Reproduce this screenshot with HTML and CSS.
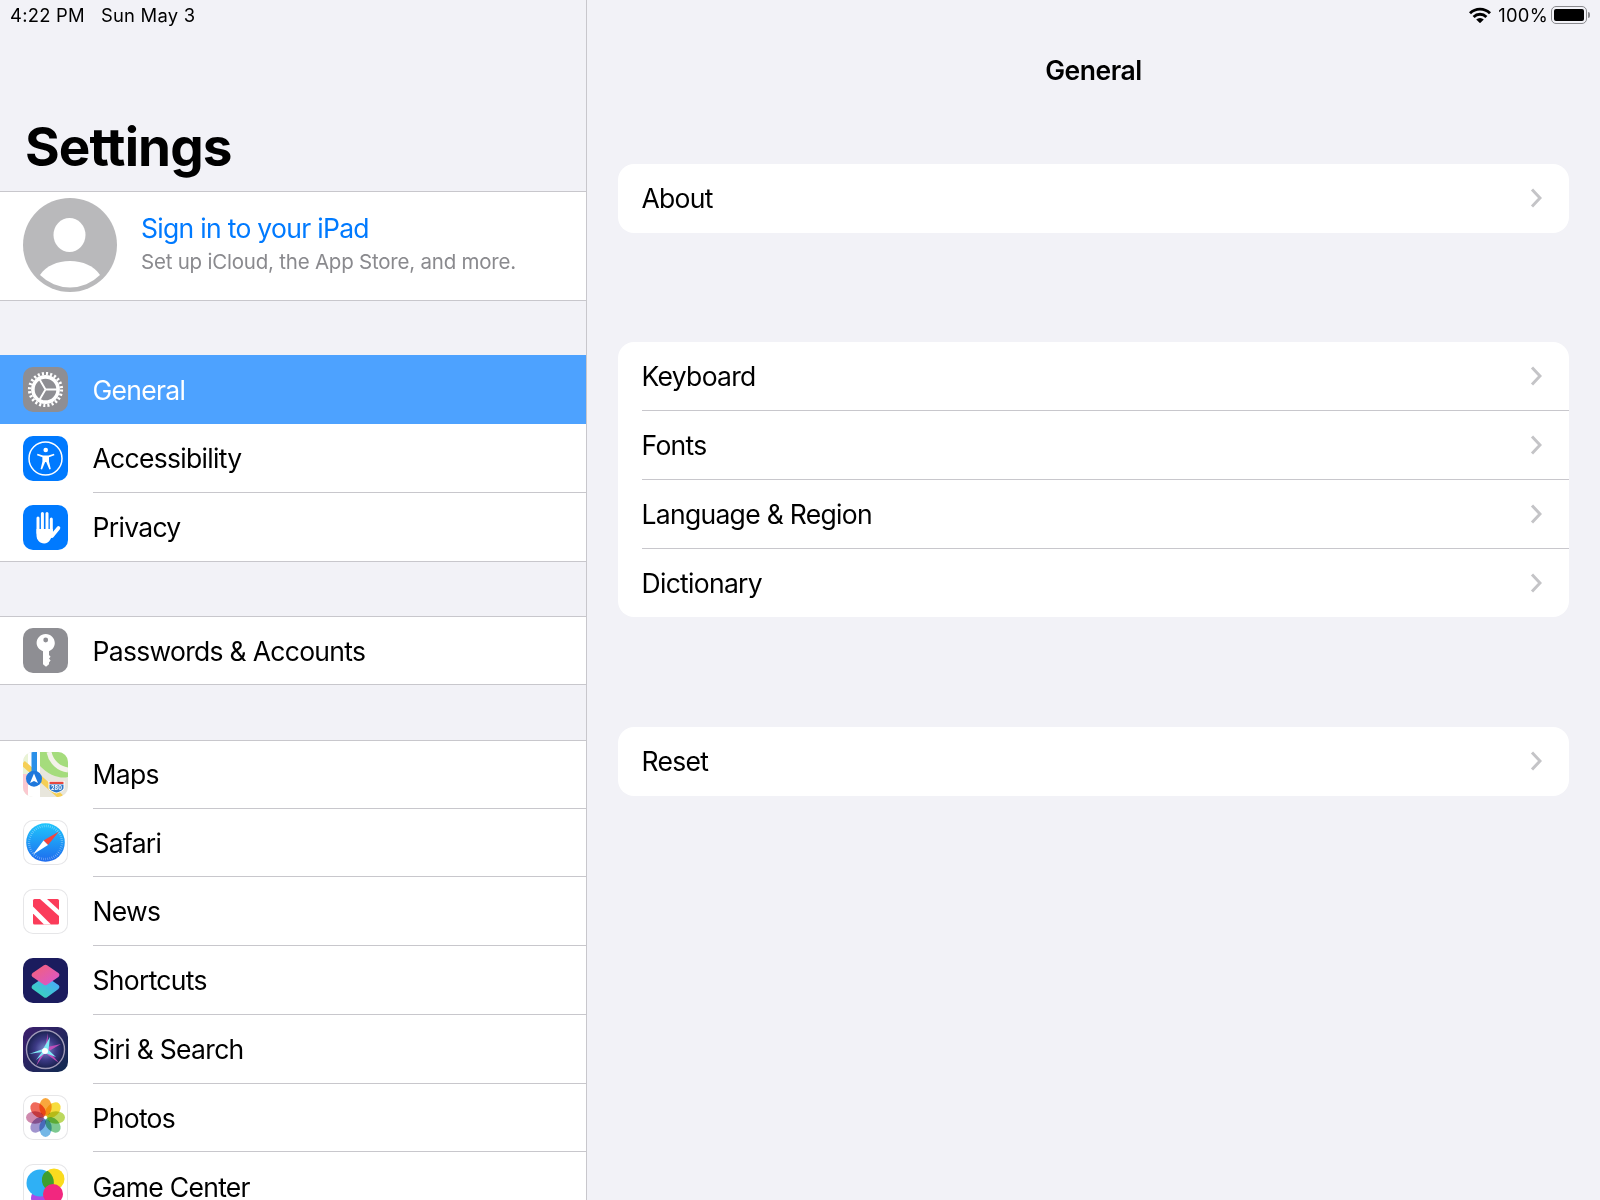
FILE: index.html
```html
<!DOCTYPE html>
<html lang="en">
<head>
<meta charset="UTF-8">
<meta name="viewport" content="width=device-width, initial-scale=1.0">
<title>Settings</title>
<link rel="stylesheet" href="styles.css">
</head>
<body>

<div class="app">

    <!-- left column -->
    <aside class="sidebar">
        <div class="status">
            <span class="status-time">4:22 PM</span>
            <span>Sun May 3</span>
        </div>
        <h1 class="large-title">Settings</h1>

        <div class="profile">
            <svg class="avatar" viewBox="0 0 94 94">
                <circle cx="47" cy="47" r="47" fill="#b9b9bb"/>
                <ellipse cx="46.5" cy="37" rx="16" ry="17" fill="#fff"/>
                <path d="M17 77C23 68 34 63 47 63C60 63 71 68 77 77A42.4 42.4 0 0 1 17 77Z" fill="#fff"/>
            </svg>
            <div class="profile-text">
                <div class="profile-name">Sign in to your iPad</div>
                <div class="profile-sub">Set up iCloud, the App Store, and more.</div>
            </div>
        </div>

        <div class="group">
            <div class="row row-active">
                <svg class="icon" viewBox="0 0 45 45">
                    <rect width="45" height="45" fill="#8e8e93"/>
                    <circle cx="22.5" cy="22.5" r="16" fill="none" stroke="#fff" stroke-width="3.2" stroke-dasharray="2.09 2.1"/>
                    <circle cx="22.5" cy="22.5" r="12.6" fill="none" stroke="#fff" stroke-width="3.6"/>
                    <path d="M22.5 22.5H34M22.5 22.5L16.8 12.8M22.5 22.5L16.8 32.2" stroke="#fff" stroke-width="1.9" fill="none"/>
                </svg>
                <div class="row-body">General</div>
            </div>
            <div class="row">
                <svg class="icon" viewBox="0 0 45 45">
                    <rect width="45" height="45" fill="#007aff"/>
                    <circle cx="22.5" cy="22.5" r="16.5" fill="none" stroke="#fff" stroke-width="1.5"/>
                    <circle cx="22.7" cy="14" r="2.3" fill="#fff"/>
                    <path d="M14.5 17.8L20 19.4H25.4L31 17.8L31.4 19.2L26 21.2V25.4L27.8 33L26.4 33.4L23.2 26H22.2L19 33.4L17.6 33L19.4 25.4V21.2L14 19.2Z" fill="#fff"/>
                </svg>
                <div class="row-body">Accessibility</div>
            </div>
            <div class="row">
                <svg class="icon" viewBox="0 0 45 45">
                    <rect width="45" height="45" fill="#007aff"/>
                    <path d="M15 13V28M19.4 8.5V26M24 8.5V26M28.3 14V28" stroke="#fff" stroke-width="3" stroke-linecap="round" fill="none"/>
                    <path d="M29 31L35.5 23" stroke="#fff" stroke-width="3.6" stroke-linecap="round" fill="none"/>
                    <path d="M13.5 24H29.8V30L27 35C25.6 37.4 23.8 38.4 21.2 38.4C16.4 38.4 13.5 35 13.5 30Z" fill="#fff"/>
                </svg>
                <div class="row-body">Privacy</div>
            </div>
        </div>

        <div class="group">
            <div class="row">
                <svg class="icon" viewBox="0 0 45 45">
                    <rect width="45" height="45" fill="#8e8e93"/>
                    <path d="M22.7 6C27.8 6 31.8 10 31.8 15C31.8 18.6 29.6 21.8 26 23.2V27L27.6 28.8L26 30.6L27.6 32.4L26 34.4V36.2L23 38.8L20 36.2V23.2C16.2 21.8 13.6 18.6 13.6 15C13.6 10 17.6 6 22.7 6Z" fill="#fff"/>
                    <circle cx="22.7" cy="12" r="2.4" fill="#8e8e93"/>
                </svg>
                <div class="row-body">Passwords &amp; Accounts</div>
            </div>
        </div>

        <div class="group">
            <div class="row">
                <svg class="icon" viewBox="0 0 45 45">
                    <rect width="45" height="45" fill="#e8e6dc"/>
                    <path d="M16 0H45V25C38 27 26 24 16 13Z" fill="#a5dc7c"/>
                    <path d="M26 0C28 10 36 17 45 18" fill="none" stroke="#f4f2ea" stroke-width="5"/>
                    <rect x="5" width="12" height="45" fill="#fff"/>
                    <rect width="5" height="45" fill="#e9f3d4"/>
                    <rect y="22" width="5" height="23" fill="#fbc8d0"/>
                    <path d="M0 11L38 45" fill="none" stroke="#f5cf56" stroke-width="5.5"/>
                    <rect x="8.5" width="5.5" height="22" fill="#2a90e8"/>
                    <circle cx="11" cy="26.7" r="8" fill="#1f78dc"/>
                    <path d="M11 21.5L15 31L11 29L7 31Z" fill="#fff"/>
                    <path d="M25.5 29H41.5V36C41.5 38.5 37 40.5 33.5 41.5C30 40.5 25.5 38.5 25.5 36Z" fill="#fff"/>
                    <path d="M26.5 32.5H40.5V36C40.5 38 37 39.6 33.5 40.5C30 39.6 26.5 38 26.5 36Z" fill="#2f78c8"/>
                    <path d="M26.5 29.8H40.5V32H26.5Z" fill="#e5483f"/>
                    <text class="shield-text" x="33.5" y="38" text-anchor="middle">280</text>
                </svg>
                <div class="row-body">Maps</div>
            </div>
            <div class="row">
                <svg class="icon icon-light" viewBox="0 0 45 45">
                    <defs>
                        <linearGradient id="safariBlue" x1="0" y1="0" x2="0" y2="1">
                            <stop offset="0" stop-color="#1fc6fc"/>
                            <stop offset="1" stop-color="#1e6bee"/>
                        </linearGradient>
                    </defs>
                    <circle cx="22.5" cy="22.5" r="19.3" fill="url(#safariBlue)"/>
                    <circle cx="22.5" cy="22.5" r="16.5" fill="none" stroke="#fff" stroke-opacity=".55" stroke-width="2.4" stroke-dasharray=".5 1.6"/>
                    <path d="M36 11.5L25 25L20.5 20.5Z" fill="#f5433d"/>
                    <path d="M10 34.5L20.5 20.5L25 25Z" fill="#fff"/>
                </svg>
                <div class="row-body">Safari</div>
            </div>
            <div class="row">
                <svg class="icon icon-light" viewBox="0 0 45 45">
                    <rect x="10" y="10" width="26" height="25.5" rx="1.5" fill="#fb3c5a"/>
                    <path d="M17 10L36 27V21L24 10Z" fill="#fff"/>
                    <path d="M10 17.5L28 35.5H21L10 24.5Z" fill="#fff"/>
                </svg>
                <div class="row-body">News</div>
            </div>
            <div class="row">
                <svg class="icon" viewBox="0 0 45 45">
                    <defs>
                        <linearGradient id="scTop" x1="0" y1="0" x2="1" y2="1">
                            <stop offset="0" stop-color="#f2607f"/>
                            <stop offset="1" stop-color="#d957c8"/>
                        </linearGradient>
                        <linearGradient id="scBottom" x1="0" y1="1" x2="1" y2="0">
                            <stop offset="0" stop-color="#38d6b8"/>
                            <stop offset="1" stop-color="#4aa8ff"/>
                        </linearGradient>
                    </defs>
                    <rect width="45" height="45" fill="#1b1c5e"/>
                    <path d="M22.5 21.5L33.5 29L22.5 37L11.5 29Z" fill="url(#scBottom)" stroke="url(#scBottom)" stroke-width="5.5" stroke-linejoin="round"/>
                    <path d="M22.5 9.5L33.5 17L22.5 24.5L11.5 17Z" fill="url(#scTop)" stroke="url(#scTop)" stroke-width="5.5" stroke-linejoin="round"/>
                </svg>
                <div class="row-body">Shortcuts</div>
            </div>
            <div class="row">
                <svg class="icon" viewBox="0 0 45 45">
                    <defs>
                        <linearGradient id="siriBg" x1="0" y1="0" x2="1" y2="1">
                            <stop offset="0" stop-color="#3d1f6e"/>
                            <stop offset="1" stop-color="#102a50"/>
                        </linearGradient>
                        <radialGradient id="siriGlow">
                            <stop offset="0" stop-color="#7f8fd0"/>
                            <stop offset=".55" stop-color="#3d3a86"/>
                            <stop offset="1" stop-color="#19204e"/>
                        </radialGradient>
                    </defs>
                    <rect width="45" height="45" fill="url(#siriBg)"/>
                    <circle cx="22.5" cy="22.5" r="19" fill="url(#siriGlow)" stroke="#a09ab8" stroke-width="1.4"/>
                    <path d="M25 6L24.5 20L38 17L26 24L36 36L22 26L13 39L19 25L22 20Z" fill="#d14fc0" opacity=".85"/>
                    <path d="M6 27L20 22L27 10L25.5 23L33 30L22 26L13 33L19 25Z" fill="#7fe9f5"/>
                    <circle cx="22" cy="24" r="3" fill="#fff"/>
                </svg>
                <div class="row-body">Siri &amp; Search</div>
            </div>
            <div class="row">
                <svg class="icon icon-light" viewBox="0 0 45 45">
                    <g class="petals">
                        <ellipse cx="22.5" cy="12" rx="6.2" ry="9" fill="#f9a63c"/>
                        <ellipse cx="22.5" cy="12" rx="6.2" ry="9" fill="#f7dc3e" transform="rotate(45 22.5 22.5)"/>
                        <ellipse cx="22.5" cy="12" rx="6.2" ry="9" fill="#bcd85e" transform="rotate(90 22.5 22.5)"/>
                        <ellipse cx="22.5" cy="12" rx="6.2" ry="9" fill="#7cc990" transform="rotate(135 22.5 22.5)"/>
                        <ellipse cx="22.5" cy="12" rx="6.2" ry="9" fill="#74b7e6" transform="rotate(180 22.5 22.5)"/>
                        <ellipse cx="22.5" cy="12" rx="6.2" ry="9" fill="#a194ce" transform="rotate(225 22.5 22.5)"/>
                        <ellipse cx="22.5" cy="12" rx="6.2" ry="9" fill="#cf8aae" transform="rotate(270 22.5 22.5)"/>
                        <ellipse cx="22.5" cy="12" rx="6.2" ry="9" fill="#f06a5c" transform="rotate(315 22.5 22.5)"/>
                    </g>
                    <circle cx="22.5" cy="22.5" r="1" fill="#fff"/>
                </svg>
                <div class="row-body">Photos</div>
            </div>
            <div class="row">
                <svg class="icon icon-light" viewBox="0 0 45 45">
                    <circle cx="16" cy="34" r="8" fill="#a94ce8"/>
                    <circle cx="17" cy="19" r="13.5" fill="#2fb0f5"/>
                    <circle cx="31" cy="15" r="10.5" fill="#fadb1e"/>
                    <path d="M24.5 6.8A13.5 13.5 0 0 1 28 26.5A10.5 10.5 0 0 1 24.5 6.8Z" fill="#3f9e2e"/>
                    <circle cx="30" cy="30" r="10" fill="#f2277f"/>
                </svg>
                <div class="row-body">Game Center</div>
            </div>
        </div>
    </aside>

    <!-- right column -->
    <main class="detail">
        <div class="status status-right">
            <svg class="wifi" viewBox="0 0 22 16">
                <path d="M0 5.2A15.6 15.6 0 0 1 22 5.2L20 7.3A12.8 12.8 0 0 0 2 7.3Z" fill="#000"/>
                <path d="M3.6 8.9A10.5 10.5 0 0 1 18.4 8.9L16.4 11A7.7 7.7 0 0 0 5.6 11Z" fill="#000"/>
                <path d="M7.2 12.5A5.4 5.4 0 0 1 14.8 12.5L11 16.2Z" fill="#000"/>
            </svg>
            <span>100%</span>
            <div class="battery"><div class="battery-fill"></div></div>
            <div class="battery-nub"></div>
        </div>
        <h2 class="nav-title">General</h2>

        <div class="card card-first">
            <div class="card-row"><span>About</span><svg class="chevron" viewBox="0 0 12 20"><path d="M2 1.5L10 10L2 18.5"/></svg></div>
        </div>

        <div class="card">
            <div class="card-row"><span>Keyboard</span><svg class="chevron" viewBox="0 0 12 20"><path d="M2 1.5L10 10L2 18.5"/></svg></div>
            <div class="card-row"><span>Fonts</span><svg class="chevron" viewBox="0 0 12 20"><path d="M2 1.5L10 10L2 18.5"/></svg></div>
            <div class="card-row"><span>Language &amp; Region</span><svg class="chevron" viewBox="0 0 12 20"><path d="M2 1.5L10 10L2 18.5"/></svg></div>
            <div class="card-row"><span>Dictionary</span><svg class="chevron" viewBox="0 0 12 20"><path d="M2 1.5L10 10L2 18.5"/></svg></div>
        </div>

        <div class="card">
            <div class="card-row"><span>Reset</span><svg class="chevron" viewBox="0 0 12 20"><path d="M2 1.5L10 10L2 18.5"/></svg></div>
        </div>
    </main>

</div>

</body>
</html>
```

FILE: styles.css
```css
html, body {
    margin: 0;
    height: 1200px;
    overflow: hidden;
}
body {
    font-family: Inter, "Noto Sans", sans-serif;
    font-size: 26.5px;
    letter-spacing: -0.7px;
    color: #000;
    background-color: #f2f2f7;
}
.app {
    display: flex;
    height: 1200px;
}

/* status bar */
.status {
    display: flex;
    align-items: center;
    height: 30px;
    font-size: 18.4px;
    letter-spacing: 0.25px;
    white-space: nowrap;
}
.status-time {
    margin-left: 10px;
    margin-right: 16px;
}
.status-right {
    justify-content: flex-end;
    padding-right: 10px;
}
.wifi {
    width: 22px;
    height: 16px;
    margin-right: 7.5px;
}
.battery {
    width: 36px;
    height: 18px;
    margin-left: 3px;
    padding: 2px;
    border: 1.5px solid #8a8a8e;
    border-radius: 5px;
    box-sizing: border-box;
}
.battery-fill {
    height: 100%;
    background-color: #000;
    border-radius: 2px;
}
.battery-nub {
    width: 2px;
    height: 6px;
    margin-left: 1px;
    background-color: #8a8a8e;
    border-radius: 0 2px 2px 0;
}

/* left column */
.sidebar {
    width: 586px;
    flex: none;
    border-right: 1px solid #c8c7cc;
    overflow: hidden;
}
.large-title {
    margin: 0;
    height: 161px;
    padding: 87px 0 0 25px;
    box-sizing: border-box;
    font-size: 53px;
    font-weight: 700;
    line-height: 60px;
    letter-spacing: -0.9px;
}
.profile {
    display: flex;
    align-items: center;
    height: 109.5px;
    padding-left: 23px;
    background-color: #fff;
    border-top: 1px solid #c8c7cc;
    border-bottom: 1px solid #c8c7cc;
    box-sizing: border-box;
}
.avatar {
    width: 94px;
    height: 94px;
    flex: none;
    margin-top: -2px;
}
.profile-text {
    margin-left: 24px;
    margin-top: -5px;
}
.profile-name {
    color: #007aff;
    line-height: 34px;
}
.profile-sub {
    margin-top: 3px;
    font-size: 20.5px;
    line-height: 28px;
    letter-spacing: -0.22px;
    color: #8a8a8e;
}
.group {
    margin-top: 54.75px;
    background-color: #fff;
    box-shadow: inset 0 1px #c8c7cc, inset 0 -1px #c8c7cc;
}
.row {
    display: flex;
    align-items: center;
    height: 68.75px;
    padding-left: 23px;
    box-sizing: border-box;
}
.icon {
    width: 45px;
    height: 45px;
    flex: none;
    border-radius: 10px;
}
.icon-light {
    background-color: #fff;
    box-shadow: inset 0 0 0 1px #e6e6e8;
}
.shield-text {
    font-size: 5.5px;
    font-weight: 700;
    letter-spacing: 0;
    fill: #fff;
}
.petals ellipse {
    mix-blend-mode: multiply;
}
.row-body {
    display: flex;
    align-items: center;
    flex: 1;
    align-self: stretch;
    margin-left: 24.5px;
    padding-top: 0.5px;
    border-bottom: 1px solid #c8c7cc;
}
.row:last-child .row-body {
    border-bottom: none;
}
.row-active {
    background-color: #4da2ff;
}
.row-active .row-body {
    color: #fff;
    border-bottom: none;
}

/* right column */
.detail {
    flex: 1;
    padding: 0 31px 0 31px;
}
.detail .status {
    margin-right: -31px;
}
.nav-title {
    margin: 0;
    height: 134px;
    padding-top: 23px;
    box-sizing: border-box;
    font-size: 26.5px;
    font-weight: 600;
    line-height: 34px;
    letter-spacing: -0.45px;
    text-align: center;
}
.card {
    margin-top: 109.5px;
    background-color: #fff;
    border-radius: 16px;
    overflow: hidden;
}
.card-first {
    margin-top: 0;
}
.card-row {
    display: flex;
    align-items: center;
    justify-content: space-between;
    height: 68.75px;
    margin-left: 23.5px;
    padding-right: 27px;
    box-sizing: border-box;
    border-bottom: 1px solid #c8c7cc;
}
.card-row:last-child {
    border-bottom: none;
}
.chevron {
    width: 12px;
    height: 20px;
    fill: none;
    stroke: #c4c4c7;
    stroke-width: 3;
}
```
